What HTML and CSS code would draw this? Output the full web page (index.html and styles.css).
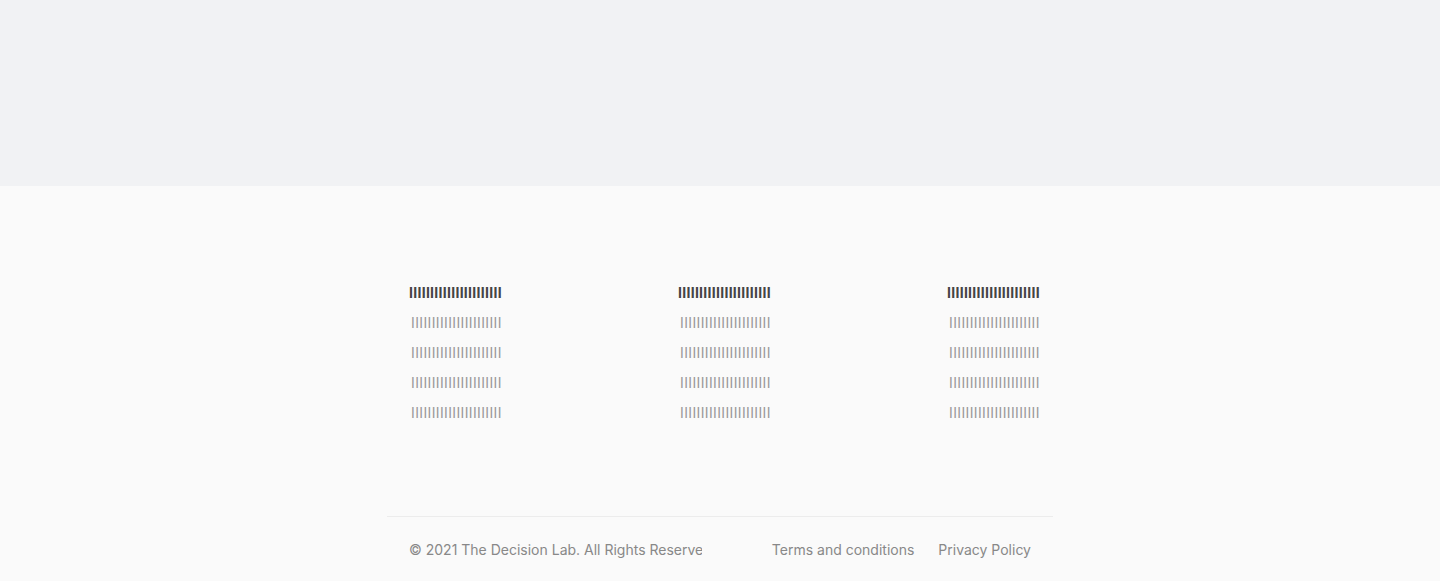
FILE: index.html
```html
<!DOCTYPE html>
<html>
<head>
<meta charset="utf-8">
<link rel="stylesheet" href="styles.css">
</head>
<body>
<div class="hero"></div>
<footer class="footer">
  <div class="inner">
    <div class="cols">
      <div class="col">
        <div class="col-title">IIIIIIIIIIIIIIIIIIIIII</div>
        <a class="col-link">IIIIIIIIIIIIIIIIIIIIII</a>
        <a class="col-link">IIIIIIIIIIIIIIIIIIIIII</a>
        <a class="col-link">IIIIIIIIIIIIIIIIIIIIII</a>
        <a class="col-link">IIIIIIIIIIIIIIIIIIIIII</a>
      </div>
      <div class="col">
        <div class="col-title">IIIIIIIIIIIIIIIIIIIIII</div>
        <a class="col-link">IIIIIIIIIIIIIIIIIIIIII</a>
        <a class="col-link">IIIIIIIIIIIIIIIIIIIIII</a>
        <a class="col-link">IIIIIIIIIIIIIIIIIIIIII</a>
        <a class="col-link">IIIIIIIIIIIIIIIIIIIIII</a>
      </div>
      <div class="col">
        <div class="col-title">IIIIIIIIIIIIIIIIIIIIII</div>
        <a class="col-link">IIIIIIIIIIIIIIIIIIIIII</a>
        <a class="col-link">IIIIIIIIIIIIIIIIIIIIII</a>
        <a class="col-link">IIIIIIIIIIIIIIIIIIIIII</a>
        <a class="col-link">IIIIIIIIIIIIIIIIIIIIII</a>
      </div>
    </div>
    <div class="bottom">
      <div class="copy">© 2021 The Decision Lab. All Rights Reserved.</div>
      <nav class="legal">
        <a>Terms and conditions</a>
        <a>Privacy Policy</a>
      </nav>
    </div>
  </div>
</footer>
</body>
</html>
```
FILE: styles.css
```css
* { box-sizing: border-box; }
html, body { margin: 0; padding: 0; }
body {
  font-family: Inter, "Noto Sans", sans-serif;
  background: #fafafa;
  height: 581px;
  overflow: hidden;
}
.hero {
  height: 186px;
  background: #f1f2f4;
}
.footer {
  background: #fafafa;
}
.inner {
  width: 666px;
  margin: 0 auto;
}
.cols {
  display: grid;
  grid-template-columns: 269px 269px auto;
  padding: 99px 22px 0;
  height: 330px;
}
.col {
  display: flex;
  flex-direction: column;
}
.col-title {
  font-size: 14px;
  font-weight: 700;
  color: #444;
  line-height: 16px;
  height: 16px;
  margin-bottom: 14px;
  letter-spacing: 0.29px;
  white-space: nowrap;
}
.col-link {
  font-size: 14px;
  color: #999;
  line-height: 16px;
  height: 30px;
  padding-left: 2px;
  letter-spacing: 0.37px;
  white-space: nowrap;
}
.bottom {
  border-top: 1px solid #ececec;
  display: flex;
  align-items: center;
  padding: 0 22px;
  height: 65px;
}
.copy {
  width: 293px;
  overflow: hidden;
  white-space: nowrap;
  font-size: 14px;
  color: #888;
}
.legal {
  margin-left: auto;
  display: flex;
  gap: 24px;
}
.legal a {
  font-size: 14px;
  color: #888;
}
```
